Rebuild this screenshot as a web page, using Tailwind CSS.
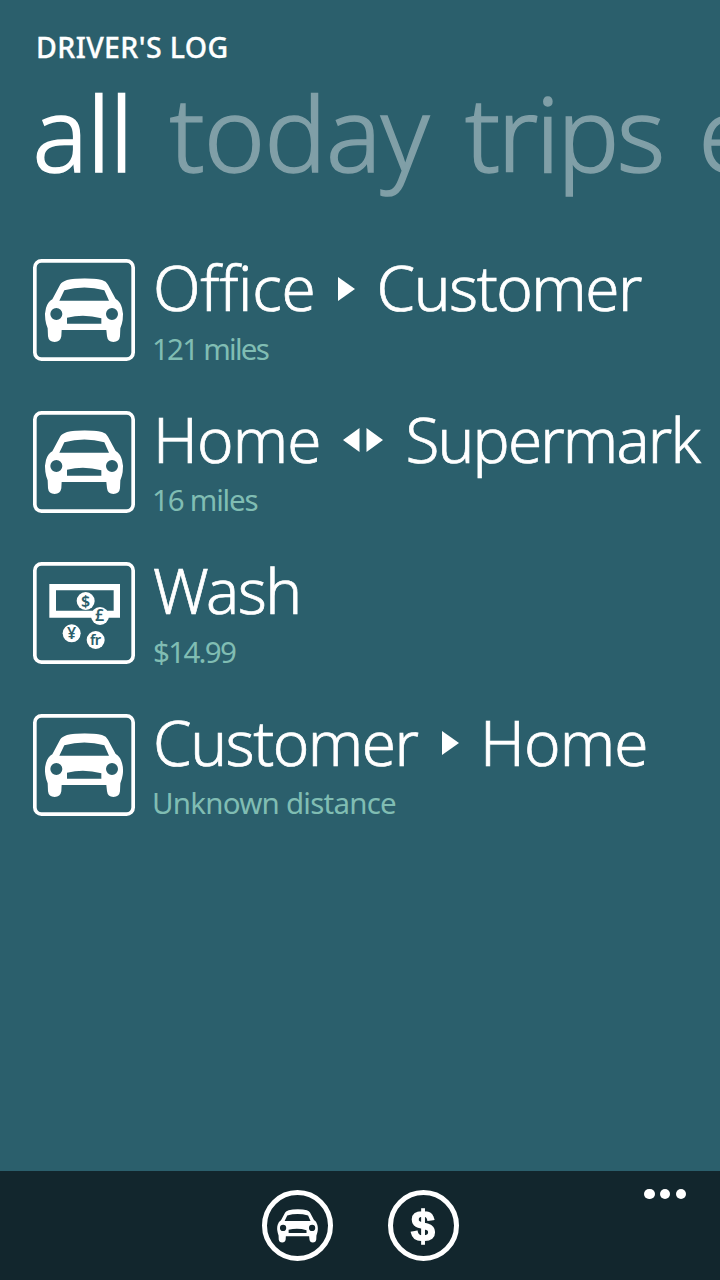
<!DOCTYPE html>
<html lang="en">
<head>
<meta charset="utf-8">
<title>Driver's Log</title>
<script src="https://cdn.jsdelivr.net/npm/@tailwindcss/browser@4"></script>
</head>
<body class="bg-[#2b5f6c]">
<svg class="hidden">
  <symbol id="car" viewBox="62 86 236 192">
    <path fill-rule="evenodd" d="M109 104Q114 96 129 91Q150 86 182 86Q214 86 234 91Q247 95 252 105L275 148Q289 156 294 175Q299 192 296 211Q294 224 289 236L288 260Q286 277 268 277Q251 277 249 260L247 241H113L112 260Q109 277 92 277Q74 277 72 260L71 236Q66 224 64 210Q61 192 66 175Q71 157 85 149ZM121 122L106 153H255L241 122Q181 105 121 122ZM129 204V222H232V206Q181 192 129 204ZM79 193A18 18 0 1 0 115 193A18 18 0 1 0 79 193ZM246 193A18 18 0 1 0 282 193A18 18 0 1 0 246 193Z"/>
  </symbol>
  <symbol id="cartile" viewBox="27 28 306 306">
    <rect x="32.500" y="33.500" width="295" height="295" rx="20" fill="none" stroke="#fff" stroke-width="11"/>
    <use href="#car" x="62" y="86" width="236" height="192"/>
  </symbol>
</svg>

<div class="flex h-[1280px] w-[720px] flex-col overflow-hidden font-['Noto_Sans','Open_Sans',sans-serif] text-white">
  <h1 class="mt-[27px] pl-9 text-[28.5px] leading-10 font-medium tracking-[0.4px] whitespace-nowrap [-webkit-text-stroke:0.3px_currentColor]">DRIVER'S LOG</h1>

  <nav class="-mt-[7px] flex h-36 shrink-0 pl-8 text-[103.5px] leading-36 font-light whitespace-nowrap text-[#809fa7] [-webkit-text-stroke:1.5px_currentColor]">
    <span class="w-[137.5px] shrink-0 pl-[0.5px] tracking-[-1.3px] text-white">all</span>
    <span class="w-[295.5px] shrink-0 tracking-[-0.6px]">today</span>
    <span class="w-[233.5px] shrink-0 tracking-[-2.6px]">trips</span>
    <span class="shrink-0">expenses</span>
  </nav>

  <main class="mt-[46px] flex flex-1 flex-col pl-[33px] whitespace-nowrap">
    <section class="flex h-[151.5px] gap-4">
      <svg class="mt-[9.4px] size-[102px] shrink-0 fill-white"><use href="#cartile"/></svg>
      <div class="pt-px">
        <h2 class="flex h-[72px] items-center text-[62px] leading-[72px] font-light [-webkit-text-stroke:0.7px_currentColor]">
          <span class="w-[187px] pl-[2px] tracking-[-0.3px]">Office</span>
          <svg class="mt-[3px] h-6 w-[17px] fill-white" viewBox="0 0 17 24"><path d="M0 0L17 12L0 24Z"/></svg>
          <span class="ml-[21.5px] tracking-[-1.5px]">Customer</span>
        </h2>
        <p class="mt-1.5 pl-px text-[29.5px] leading-10 tracking-[-1.75px] text-[#80bdb3]">121 miles</p>
      </div>
    </section>

    <section class="flex h-[151.5px] gap-4">
      <svg class="mt-[9px] size-[102px] shrink-0 fill-white"><use href="#cartile"/></svg>
      <div class="pt-px">
        <h2 class="flex h-[72px] items-center text-[62px] leading-[72px] font-light [-webkit-text-stroke:0.7px_currentColor]">
          <span class="w-[192px] pl-[2px] tracking-[-0.9px]">Home</span>
          <svg class="mt-[3px] h-6 w-[40px] fill-white" viewBox="0 0 40 24"><path d="M16.500 0V24L0 12ZM23.500 0L40 12L23.500 24Z"/></svg>
          <span class="ml-[22.5px] tracking-[-1.85px]">Supermark</span>
        </h2>
        <p class="mt-[5px] pl-px text-[29.5px] leading-10 tracking-[-1.2px] text-[#80bdb3]">16 miles</p>
      </div>
    </section>

    <section class="flex h-[151.5px] gap-4">
      <svg class="mt-[9.4px] size-[102px] shrink-0" viewBox="27 28 306 306">
        <rect x="32.500" y="33.500" width="295" height="295" rx="20" fill="none" stroke="#fff" stroke-width="11"/>
        <path fill="#fff" fill-rule="evenodd" d="M76 94H288V195H76ZM96 113V174H269V113Z"/>
        <g fill="#fff"><circle cx="185" cy="145" r="27"/><circle cx="228" cy="190" r="27"/><circle cx="143" cy="242" r="27"/><circle cx="215" cy="262" r="27"/></g>
        <g fill="#2b5f6c" class="font-['Noto_Sans',sans-serif] text-[48px] font-semibold" text-anchor="middle">
          <text x="185" y="162">$</text><text x="227" y="206">£</text><text x="143" y="260">¥</text><text x="214" y="278" letter-spacing="-2" font-size="44">fr</text>
        </g>
      </svg>
      <div class="pt-px">
        <h2 class="flex h-[72px] items-center text-[62px] leading-[72px] font-light [-webkit-text-stroke:0.7px_currentColor]">
          <span class="pl-[2px] tracking-[-1.5px]">Wash</span>
        </h2>
        <p class="mt-1.5 pl-[2px] text-[29.5px] leading-10 tracking-[-1.68px] text-[#80bdb3]">$14.99</p>
      </div>
    </section>

    <section class="flex h-[151.5px] gap-4">
      <svg class="mt-[9px] size-[102px] shrink-0 fill-white"><use href="#cartile"/></svg>
      <div class="pt-px">
        <h2 class="flex h-[72px] items-center text-[62px] leading-[72px] font-light [-webkit-text-stroke:0.7px_currentColor]">
          <span class="w-[290.5px] pl-[2px] tracking-[-1.5px]">Customer</span>
          <svg class="mt-[3px] h-6 w-[17px] fill-white" viewBox="0 0 17 24"><path d="M0 0L17 12L0 24Z"/></svg>
          <span class="ml-[21.5px] tracking-[-0.9px]">Home</span>
        </h2>
        <p class="mt-[5px] pl-px text-[29.5px] leading-10 tracking-[-0.77px] text-[#80bdb3]">Unknown distance</p>
      </div>
    </section>
  </main>

  <footer class="grid h-[109px] shrink-0 grid-cols-[1fr_auto_1fr] bg-[#12262d]">
    <div></div>
    <div class="mt-[19.4px] flex gap-[55px]">
      <button class="flex size-[71px] items-center justify-center rounded-full border-5 border-white"><svg class="h-[34px] w-[41px] fill-white blur-[0.5px]"><use href="#car"/></svg></button>
      <button class="flex size-[71px] items-center justify-center rounded-full border-5 border-white"><svg class="size-[50px] fill-white stroke-white blur-[0.5px]" viewBox="0 0 50 50"><text x="25" y="40" text-anchor="middle" stroke-width="1.500" class="font-['Liberation_Sans',sans-serif] text-[43px] font-bold">$</text></svg></button>
    </div>
    <div class="mt-[18px] mr-[34px] flex gap-[5.5px] justify-self-end">
      <i class="size-[10.2px] rounded-full bg-white"></i><i class="size-[10.2px] rounded-full bg-white"></i><i class="size-[10.2px] rounded-full bg-white"></i>
    </div>
  </footer>
</div>
</body>
</html>
